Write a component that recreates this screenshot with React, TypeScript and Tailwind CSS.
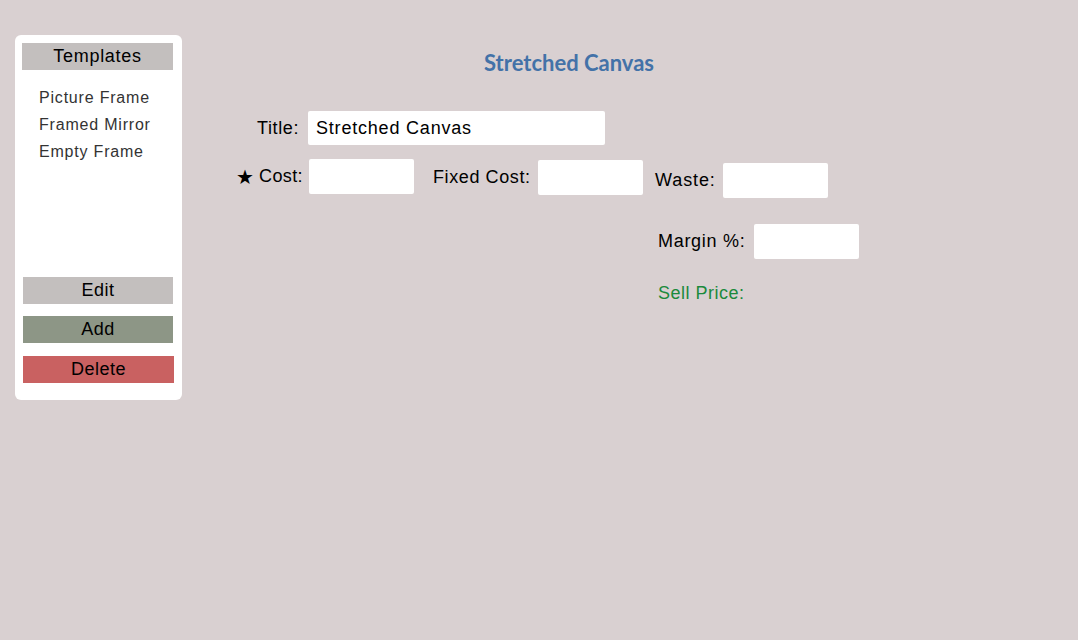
import React from "react";

export default function App() {
  const f = { fontFamily: '"Liberation Sans", Arial, sans-serif' };
  return (
    <div
      className="w-[1078px] h-[640px] bg-[#d9d0d1] flex items-start pt-[35px] pl-[15px] text-black whitespace-nowrap"
      style={f}
    >
      <div className="w-[167px] h-[365px] bg-white rounded-[6px] flex flex-col px-[7px] pt-[8px]">
        <div className="h-[27px] w-[151px] bg-[#c3bfbe] text-center text-[18px] leading-[27px] tracking-[0.7px]">
          Templates
        </div>
        <div className="mt-[14px] pl-[17px] flex flex-col text-[16px] leading-[27px] text-[#333] tracking-[0.8px]">
          <div>Picture Frame</div>
          <div>Framed Mirror</div>
          <div>Empty Frame</div>
        </div>
        <div className="mt-[112px] ml-px flex flex-col">
          <div className="h-[27px] w-[150px] bg-[#c3bfbe] text-center text-[18px] leading-[27px] tracking-[0.5px]">
            Edit
          </div>
          <div className="mt-[12px] h-[27px] w-[150px] bg-[#8d9686] text-center text-[18px] leading-[27px] tracking-[0.5px]">
            Add
          </div>
          <div className="mt-[13px] h-[27px] w-[151px] bg-[#c96161] text-center text-[18px] leading-[27px] tracking-[0.5px]">
            Delete
          </div>
        </div>
      </div>

      <div className="flex flex-col">
        <div
          className="mt-[14px] ml-[302px] text-[22px] leading-[28px] font-bold text-[#4372a8]"
          style={{ fontFamily: 'Lato, "Open Sans", sans-serif' }}
        >
          Stretched Canvas
        </div>

        <div className="mt-[34px] flex items-center">
          <div className="w-[117px] text-right text-[18px] tracking-[0.6px]">Title:</div>
          <div className="ml-[9px] h-[34px] w-[297px] rounded-[2px] bg-white px-[8px] text-[18px] leading-[34px] tracking-[0.8px]">
            Stretched Canvas
          </div>
        </div>

        <div className="mt-[14px] flex items-start">
          <div className="flex items-center">
            <div className="w-[121px] text-right text-[18px] flex justify-end items-center">
              <span
                className="text-[20px] mr-[5px] leading-none"
                style={{ fontFamily: '"DejaVu Sans", sans-serif' }}
              >
                ★
              </span>
              <span className="tracking-[0.4px]">Cost:</span>
            </div>
            <div className="ml-[6px] h-[35px] w-[105px] rounded-[2px] bg-white" />
          </div>
          <div className="ml-[19px] mt-px flex items-center">
            <div className="w-[98px] text-[18px] tracking-[0.6px]">Fixed Cost:</div>
            <div className="ml-[7px] h-[35px] w-[105px] rounded-[2px] bg-white" />
          </div>
          <div className="ml-[12px] mt-[4px] flex items-center">
            <div className="w-[61px] text-[18px] tracking-[0.9px]">Waste:</div>
            <div className="ml-[7px] h-[35px] w-[105px] rounded-[2px] bg-white" />
          </div>
        </div>

        <div className="mt-[26px] ml-[476px] flex items-center">
          <div className="w-[88px] text-[18px] tracking-[0.7px]">Margin %:</div>
          <div className="ml-[8px] h-[35px] w-[105px] rounded-[2px] bg-white" />
        </div>

        <div className="mt-[22px] ml-[476px] text-[18px] leading-[24px] text-[#1b8a3c] tracking-[0.5px]">
          Sell Price:
        </div>
      </div>
    </div>
  );
}
